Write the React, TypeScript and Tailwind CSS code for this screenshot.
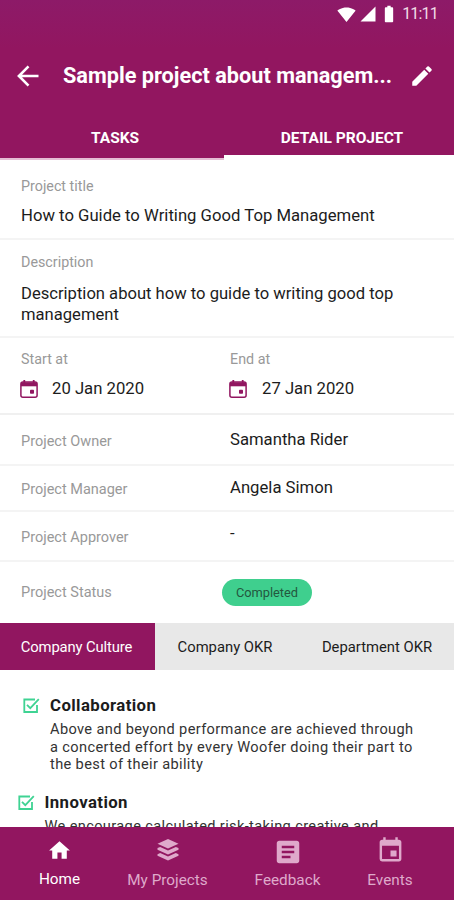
import { useState } from "react";
import { clsx } from "clsx";
import {
  MdArticle,
  MdBatteryFull,
  MdEdit,
  MdEvent,
  MdHome,
  MdSignalCellular4Bar,
  MdSignalWifi4Bar,
} from "react-icons/md";

const cultures = [
  {
    title: "Collaboration",
    lines: [
      "Above and beyond performance are achieved through",
      "a concerted effort by every Woofer doing their part to",
      "the best of their ability",
    ],
    pad: "pl-[23px]",
  },
  {
    title: "Innovation",
    lines: ["We encourage calculated risk-taking creative and"],
    pad: "pl-[17.5px]",
  },
];

const BackIcon = () => (
  <svg viewBox="0 0 22 22" className="w-[22px] h-[22px] shrink-0" fill="none" stroke="currentColor" strokeWidth="2.6">
    <path d="M21.5 11 H2.5 M11.5 1.3 L1.9 11 L11.5 20.7" />
  </svg>
);

const LayersIcon = () => (
  <svg viewBox="0 0 22 22" className="w-[22px] h-[22px]" fill="currentColor">
    <path d="M11 0 L21.5 4.7 L11 9.4 L0.5 4.7 Z" />
    <path d="M0.5 9.1 L3.2 7.9 L11 11.4 L18.8 7.9 L21.5 9.1 V10.7 L11 15.4 L0.5 10.7 Z" />
    <path d="M0.5 15.2 L3.2 14 L11 17.4 L18.8 14 L21.5 15.2 V16.7 L11 21.4 L0.5 16.7 Z" />
  </svg>
);

const CheckIcon = () => (
  <svg viewBox="0 0 17 16" className="w-[17px] h-4 shrink-0" fill="none" stroke="#3fd393" strokeWidth="1.8">
    <path d="M12 1.5 H1.3 V14 H14 V7" />
    <path d="M4 6.8 L7.3 10.2 L15.8 1.2" />
  </svg>
);

const CalendarIcon = () => (
  <svg viewBox="0 0 18 18" className="w-[18px] h-[18px] shrink-0" fill="none" stroke="#911660">
    <rect x="0.9" y="2" width="16.2" height="15.2" rx="2" strokeWidth="1.5" />
    <path d="M1 4.3 H17" strokeWidth="4" />
    <path d="M4.3 0 V3 M13.7 0 V3" strokeWidth="1.8" />
    <rect x="10" y="9.7" width="4" height="4" rx="0.8" fill="#911660" stroke="none" />
  </svg>
);

function DateField({ label, value, className, gap }: { label: string; value: string; className: string; gap: string }) {
  return (
    <div className={className}>
      <p className="text-[14.3px] leading-4 text-[#999]">{label}</p>
      <div className="flex items-center mt-2.5 h-6 -ml-px">
        <CalendarIcon />
        <span className={clsx("text-[16.7px]", gap)}>{value}</span>
      </div>
    </div>
  );
}

export default function App() {
  const [tab, setTab] = useState("Company Culture");

  return (
    <div className="w-[454px] h-[900px] bg-white text-[#1c1c1c] font-['Roboto',sans-serif] flex flex-col overflow-hidden">
      {/* Header */}
      <header className="h-[160px] shrink-0 bg-linear-to-b from-[#8d1a68] to-[#921660] to-30% text-white flex flex-col">
        <div className="h-7 flex items-center justify-end pr-4">
          <MdSignalWifi4Bar className="w-[19px] h-[19px] mr-[3px]" />
          <MdSignalCellular4Bar className="w-[18px] h-[18px] mr-0.5" />
          <MdBatteryFull className="w-5 h-5 mr-[3px]" />
          <span className="text-base tracking-[-0.8px] text-[#f0dbe7]">11:11</span>
        </div>
        <div className="h-[94px] shrink-0 flex items-center pl-[17px] pr-4 pt-0.5">
          <BackIcon />
          <h1 className="ml-6 text-[21.7px] font-bold whitespace-nowrap">Sample project about managem...</h1>
          <MdEdit className="w-[26px] h-[26px] ml-auto mr-[3px]" />
        </div>
        <div className="flex flex-1 text-[15.5px] font-bold leading-[33px] text-center">
          <div className="w-56 pl-1.5 border-b-2 border-[#e4bdd4]">TASKS</div>
          <div className="flex-1 pl-1.5 border-b-[5px] border-white">DETAIL PROJECT</div>
        </div>
      </header>

      {/* Project info */}
      <section className="h-20 shrink-0 border-b-2 border-[#f4f4f4] pl-[21px] pt-[18px]">
        <p className="text-[14.3px] leading-4 text-[#999]">Project title</p>
        <p className="mt-[11px] text-[16.7px] leading-[21px]">How to Guide to Writing Good Top Management</p>
      </section>
      <section className="h-[98px] shrink-0 border-b-2 border-[#f4f4f4] pl-[21px] pt-[14px]">
        <p className="text-[14.3px] leading-4 text-[#999]">Description</p>
        <p className="mt-[13px] text-[16.6px] leading-[21px]">
          Description about how to guide to writing good top
          <br />
          management
        </p>
      </section>
      <section className="h-[77px] shrink-0 border-b-2 border-[#f0f0f0] flex pl-[21px] pt-[13px]">
        <DateField label="Start at" value="20 Jan 2020" className="w-[209px]" gap="ml-3.5" />
        <DateField label="End at" value="27 Jan 2020" className="flex-1" gap="ml-[15px]" />
      </section>
      <Row label="Project Owner" value="Samantha Rider" className="h-[51px]" labelClass="pt-[5px]" valueClass="pt-0" />
      <Row label="Project Manager" value="Angela Simon" className="h-[46px]" labelClass="pt-1" valueClass="pb-px" />
      <Row label="Project Approver" value="-" className="h-[50px]" labelClass="pt-[3px]" valueClass="pb-1" />
      <div className="h-[61px] shrink-0 flex items-center pl-[21px]">
        <span className="w-[201px] text-[14.5px] text-[#999]">Project Status</span>
        <span className="w-[90px] h-[27px] rounded-full bg-[#3fcf8e] text-[#24573f] text-[12.8px] leading-[27px] text-center">
          Completed
        </span>
      </div>

      {/* OKR tabs */}
      <div className="h-[47px] shrink-0 flex bg-[#e8e8e8] text-[14.8px]">
        {["Company Culture", "Company OKR", "Department OKR"].map((name) => (
          <button
            key={name}
            onClick={() => setTab(name)}
            className={clsx(
              "shrink-0 pt-0.5",
              name === "Company Culture" ? "w-[155px] pr-0.5 tracking-[-0.12px]" : name === "Company OKR" ? "w-[140px]" : "w-[164px]",
              tab === name && "bg-[#911660] text-white"
            )}
          >
            {name}
          </button>
        ))}
      </div>

      <main className="flex-1 min-h-0 overflow-hidden pt-[25px]">
        {cultures.map((c) => (
          <div key={c.title} className={clsx("flex mb-[18px]", c.pad)}>
            <div className="pt-[3px]">
              <CheckIcon />
            </div>
            <div className="ml-[10px]">
              <h3 className="text-[16.8px] leading-[21px] tracking-[0.4px] font-bold">{c.title}</h3>
              <p className="mt-[5px] text-[14.6px] leading-[17.5px] tracking-[0.36px] text-[#333] whitespace-nowrap">
                {c.lines.map((line) => (
                  <span key={line} className="block">{line}</span>
                ))}
              </p>
            </div>
          </div>
        ))}
      </main>

      {/* Bottom navigation */}
      <nav className="h-[73px] shrink-0 bg-[#921660] text-[#dfa9cb] text-[15.3px] flex">
        <div className="w-[119px] flex flex-col items-center pt-[11px] text-white">
          <MdHome className="w-[25px] h-[25px]" />
          <span className="mt-1.5 leading-5">Home</span>
        </div>
        <div className="w-[97px] flex flex-col items-center pt-3">
          <LayersIcon />
          <span className="mt-[9px] leading-5 whitespace-nowrap">My Projects</span>
        </div>
        <div className="w-[143px] flex flex-col items-center pt-2.5">
          <MdArticle className="w-[30px] h-[30px]" />
          <span className="mt-[3px] leading-5">Feedback</span>
        </div>
        <div className="w-[62px] flex flex-col items-center pt-[9px]">
          <MdEvent className="w-[29px] h-[29px]" />
          <span className="mt-[5px] leading-5">Events</span>
        </div>
      </nav>
    </div>
  );
}

type RowProps = { label: string; value: string; className: string; labelClass: string; valueClass: string };

function Row({ label, value, className, labelClass, valueClass }: RowProps) {
  return (
    <div className={clsx("shrink-0 flex items-center border-b-2 border-[#f4f4f4] pl-[21px]", className)}>
      <span className={clsx("w-[209px] text-[14.5px] text-[#999]", labelClass)}>{label}</span>
      <span className={clsx("text-[16.7px]", valueClass)}>{value}</span>
    </div>
  );
}
